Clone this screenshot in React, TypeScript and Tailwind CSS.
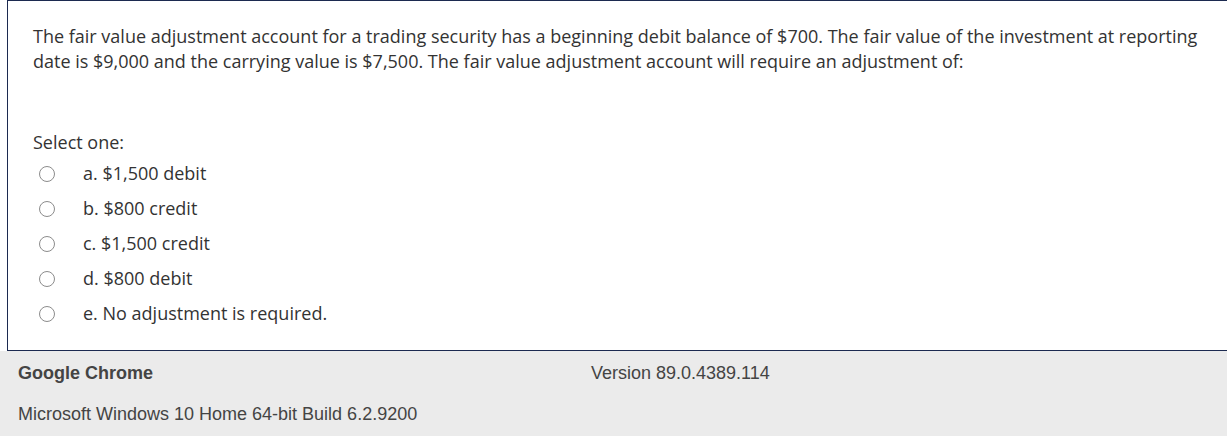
import React from "react";

const options = [
  "a. $1,500 debit",
  "b. $800 credit",
  "c. $1,500 credit",
  "d. $800 debit",
  "e. No adjustment is required.",
];

export default function App() {
  return (
    <div className="w-[1227px] h-[436px] overflow-hidden bg-white">
      <div className="ml-[7px] w-[1240px] h-[351px] border border-[#1c2a50] bg-white pl-[25px] pt-[23px] text-[#333333] font-['Open_Sans',sans-serif] text-[18px] leading-[25px]">
        <p className="w-[1185px]">
          The fair value adjustment account for a trading security has a beginning debit balance of $700. The fair value of the investment at reporting date is $9,000 and the carrying value is $7,500. The fair value adjustment account will require an adjustment of:
        </p>
        <div className="mt-[56px]">Select one:</div>
        <div className="mt-[1px] flex flex-col">
          {options.map((o) => (
            <div key={o} className="flex items-center h-[35px]">
              <span className="ml-[6px] w-[16px] h-[16px] rounded-full border border-[#8c8c8c] bg-white" />
              <span className="ml-[28px]">{o}</span>
            </div>
          ))}
        </div>
      </div>
      <div className="h-[85px] bg-[#ebebeb] font-['Liberation_Sans',Arial,sans-serif] text-[18px] leading-[20px] text-[#444444] pl-[18px] pt-[12px]">
        <div className="flex">
          <span className="w-[573px] font-bold">Google Chrome</span>
          <span>Version 89.0.4389.114</span>
        </div>
        <div className="mt-[21px]">Microsoft Windows 10 Home 64-bit Build 6.2.9200</div>
      </div>
    </div>
  );
}
